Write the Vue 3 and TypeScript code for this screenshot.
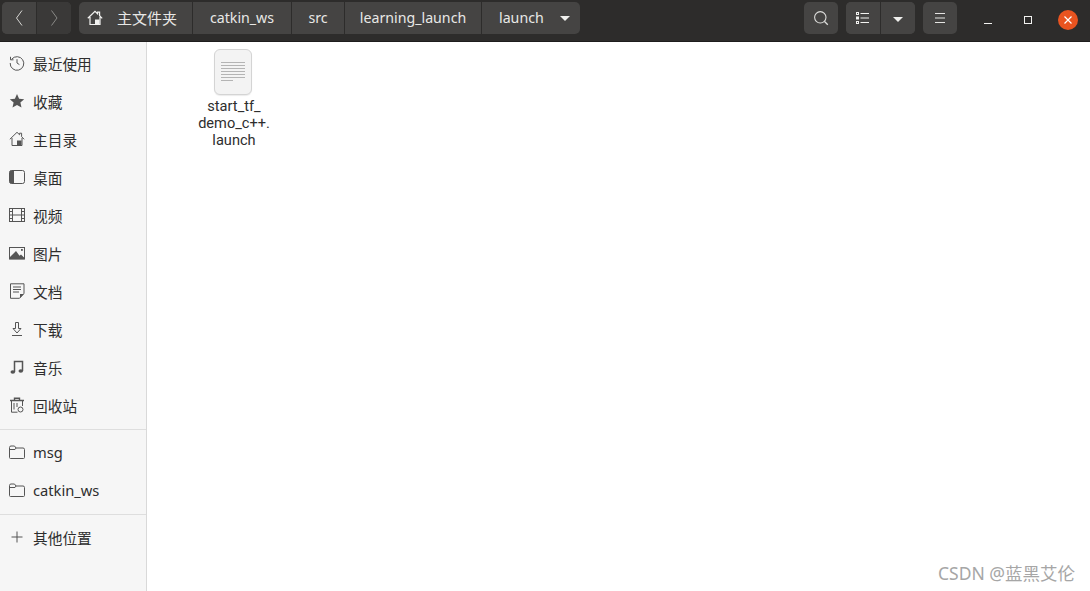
<script setup lang="ts">
interface Place { label: string; icon: string }
const groupA: Place[] = [
  { label: '最近使用', icon: 'recent' },
  { label: '收藏', icon: 'star' },
  { label: '主目录', icon: 'home' },
  { label: '桌面', icon: 'desktop' },
  { label: '视频', icon: 'video' },
  { label: '图片', icon: 'picture' },
  { label: '文档', icon: 'doc' },
  { label: '下载', icon: 'download' },
  { label: '音乐', icon: 'music' },
  { label: '回收站', icon: 'trash' },
]
const groupB: Place[] = [
  { label: 'msg', icon: 'folder' },
  { label: 'catkin_ws', icon: 'folder' },
]
const crumbs = [
  { label: 'catkin_ws', w: 99 },
  { label: 'src', w: 53 },
  { label: 'learning_launch', w: 137 },
]
</script>

<template>
  <div class="window">
    <header class="bar">
      <div class="group nav">
        <button class="btn nav-btn first">
          <svg width="16" height="16" viewBox="0 0 16 16"><path d="M11 .5 5.500 8l5.500 7.500" fill="none" stroke="#d6d6d3" stroke-width="1" /></svg>
        </button>
        <button class="btn nav-btn dim">
          <svg width="16" height="16" viewBox="0 0 16 16"><path d="M5.500 .5 11 8l-5.500 7.500" fill="none" stroke="#8a8a87" stroke-width="1" /></svg>
        </button>
      </div>
      <nav class="group path">
        <div class="crumb home-crumb">
          <svg width="16" height="16" viewBox="0 0 16 16"><path d="M.8 8.300 8 1.300l2.600 2.500V2.200h2v3.500l2.600 2.600M3 7v7.500h10V7" fill="none" stroke="#f2f2f0" stroke-width="1.200" /><rect x="8" y="9.500" width="4.500" height="5" fill="#f2f2f0" /></svg>
          <span class="home-label">主文件夹</span>
        </div>
        <div v-for="c in crumbs" :key="c.label" class="crumb" :style="{ width: c.w + 'px' }">{{ c.label }}</div>
        <div class="crumb last-crumb">
          <span>launch</span>
          <i class="caret"></i>
        </div>
      </nav>
      <div class="spacer"></div>
      <button class="btn single search">
        <svg width="16" height="16" viewBox="0 0 16 16"><circle cx="7.300" cy="7.300" r="5.700" fill="none" stroke="#dcdcda" stroke-width="1.100" /><path d="m11.500 11.500 3.300 3.300" stroke="#dcdcda" stroke-width="1.300" /></svg>
      </button>
      <div class="group view">
        <button class="btn view-a">
          <svg width="14" height="12" viewBox="0 0 14 12"><g fill="none" stroke="#f2f2f0"><rect x=".5" y=".5" width="2" height="2" /><rect x=".5" y="5" width="2" height="2" /><rect x=".5" y="9.500" width="2" height="2" /><path d="M4.500 1.500H13M4.500 6H13M4.500 10.500H13" /></g></svg>
        </button>
        <button class="btn view-b"><i class="caret"></i></button>
      </div>
      <button class="btn single menu">
        <svg width="12" height="12" viewBox="0 0 12 12"><path d="M1 1.500h10M1 6h10M1 10.500h10" stroke="#e4e4e2" stroke-width="1" /></svg>
      </button>
      <div class="win-controls">
        <span class="wc"><svg width="10" height="10" viewBox="0 0 10 10"><path d="M1 8.500h8" stroke="#f2f2f0" stroke-width="1" /></svg></span>
        <span class="wc"><svg width="10" height="10" viewBox="0 0 10 10"><rect x="1.500" y="1.500" width="7" height="7" fill="none" stroke="#f2f2f0" /></svg></span>
        <span class="wc close"><svg width="10" height="10" viewBox="0 0 10 10"><path d="m1.500 1.500 7 7m0-7-7 7" stroke="#fff" stroke-width="1.200" /></svg></span>
      </div>
    </header>

    <div class="body">
      <aside class="side">
        <ul class="list">
          <li v-for="p in groupA" :key="p.label" class="row">
            <svg class="ico" width="16" height="16" viewBox="0 0 16 16" fill="none" stroke="#555" stroke-width="1">
              <g v-if="p.icon === 'recent'"><path d="M2.700 4.200A6.800 6.800 0 1 1 1.200 8" /><path d="M1.500 1.800v3h3" /><path d="M8 4.200V8l2.400 1.600" /></g>
              <path v-else-if="p.icon === 'star'" d="m8 1 2.100 4.700 5.100.5-3.800 3.400 1.100 5L8 12l-4.500 2.600 1.100-5L.8 6.200l5.100-.5z" fill="#555" stroke="none" />
              <g v-else-if="p.icon === 'home'"><path d="M.8 8.300 8 1.300l2.600 2.500V2.200h2v3.500l2.600 2.600M3 7v7.500h10V7" /><rect x="8" y="9.500" width="4.500" height="5" fill="#555" stroke="none" /></g>
              <g v-else-if="p.icon === 'desktop'"><rect x=".5" y="1.500" width="15" height="13" rx="2" /><path d="M2.500 1.500H5v13H2.500a2 2 0 0 1-2-2v-9a2 2 0 0 1 2-2z" fill="#555" stroke="none" /></g>
              <g v-else-if="p.icon === 'video'"><rect x=".5" y="1.500" width="15" height="13" /><path d="M3.500 1.500v13M12.500 1.500v13M3.500 8h9M.5 4.500h3M.5 8h3M.5 11.500h3M12.500 4.500h3M12.500 8h3M12.500 11.500h3" /></g>
              <g v-else-if="p.icon === 'picture'"><rect x=".5" y="2.500" width="15" height="11.500" /><path d="M1 13.500h14v-1l-3-3-1.500 1.200L7 6l-6 6z" fill="#555" stroke="none" /><rect x="12" y="4" width="1.800" height="1.800" fill="#555" stroke="none" /><path d="M.5 13.500h15" stroke-width="1.500" /></g>
              <g v-else-if="p.icon === 'doc'"><path d="M15 10.500V1H1.500v14.500h9z" transform="translate(0 -.200)" /><path d="M4 4h8M4 6.500h8M4 9h6" /><path d="M15 11h-4v4z" fill="#555" stroke="none" /></g>
              <g v-else-if="p.icon === 'download'"><path d="M6.500 1.500h3v6h2.500L8 12 4 7.500h2.500zM3 14.500h10" /></g>
              <g v-else-if="p.icon === 'music'"><path d="M5.500 13V2.500h8V12" stroke-width="1.500" /><ellipse cx="3.800" cy="13" rx="2.300" ry="1.800" fill="#555" stroke="none" /><ellipse cx="11.800" cy="12" rx="2.300" ry="1.800" fill="#555" stroke="none" /></g>
              <g v-else-if="p.icon === 'trash'"><path d="M1 3.500h14M5.500 3V1.200h5V3" stroke-width="1.400" /><path d="M2.500 4v11.200h6M13.500 4v5M5 6v6.500M8 6v4" /><circle cx="11.500" cy="12.500" r="2.500" /></g>
            </svg>
            <span>{{ p.label }}</span>
          </li>
        </ul>
        <hr class="sep" />
        <ul class="list">
          <li v-for="p in groupB" :key="p.label" class="row">
            <svg class="ico" width="16" height="16" viewBox="0 0 16 16" fill="none" stroke="#555" stroke-width="1"><path d="M1.500 14.500a1 1 0 0 1-1-1v-10a1.500 1.500 0 0 1 1.500-1.500h3.500L7 4h7a1.500 1.500 0 0 1 1.500 1.500v8a1 1 0 0 1-1 1zM.5 5.500H6L7 4" /></svg>
            <span>{{ p.label }}</span>
          </li>
        </ul>
        <hr class="sep" />
        <ul class="list">
          <li class="row">
            <svg class="ico" width="16" height="16" viewBox="0 0 16 16"><path d="M8 2.500v11M2.500 8h11" stroke="#555" stroke-width="1" /></svg>
            <span>其他位置</span>
          </li>
        </ul>
      </aside>

      <main class="files">
        <figure class="file">
          <div class="thumb">
            <svg width="24" height="22" viewBox="0 0 24 22"><path d="M0 1.500h24M0 4.500h24M0 7.500h24M0 10.500h24M0 13.500h24M0 16.500h24M0 19.500h12" stroke="#b4b4b4" stroke-width="1" /></svg>
          </div>
          <figcaption>start_tf_<br />demo_c++.<br />launch</figcaption>
        </figure>
        <div class="mark">CSDN @蓝黑艾伦</div>
      </main>
    </div>
  </div>
</template>

<style scoped>
.window {
  width: 1090px;
  height: 591px;
  display: flex;
  flex-direction: column;
  overflow: hidden;
  font-family: "Noto Sans", "Noto Sans CJK SC", sans-serif;
  font-size: 14.700px;
  background: #fff;
}
.bar {
  height: 42px;
  box-sizing: border-box;
  flex: none;
  display: flex;
  align-items: flex-start;
  padding: 2px 0 0 2px;
  background: #2d2c2b;
  border-bottom: 1px solid #1e1d1d;
}
.group {
  display: flex;
  height: 32px;
  border-radius: 5px;
  background: #454443;
  overflow: hidden;
}
.btn {
  border: 0;
  padding: 0;
  margin: 0;
  height: 32px;
  background: #454443;
  display: flex;
  align-items: center;
  justify-content: center;
}
.nav { width: 69px; }
.nav-btn { width: 34.500px; }
.nav-btn.first { border-right: 1px solid #2d2c2b; }
.nav-btn.dim { background: #3a3938; }
.path {
  margin-left: 8px;
  width: 501px;
  color: #e8e8e6;
  font-size: 14.200px;
}
.crumb {
  box-sizing: border-box;
  height: 32px;
  display: flex;
  align-items: center;
  justify-content: center;
  border-right: 1px solid #2d2c2b;
  white-space: nowrap;
  padding-bottom: 2px;
}
.home-crumb {
  width: 114px;
  gap: 14px;
  justify-content: flex-start;
  padding: 0 0 0 8px;
}
.home-label {
  font-size: 15px;
  padding-bottom: 2px;
}
.last-crumb {
  flex: 1;
  border-right: 0;
  justify-content: flex-start;
  padding-left: 17px;
  gap: 16px;
}
.caret {
  width: 0;
  height: 0;
  border-left: 5px solid transparent;
  border-right: 5px solid transparent;
  border-top: 5px solid #f0f0ee;
  margin-top: 2px;
}
.spacer { flex: 1; }
.single {
  width: 34px;
  border-radius: 5px;
}
.view {
  width: 69px;
  margin-left: 8px;
}
.view-a {
  width: 34px;
  border-right: 1px solid #2d2c2b;
  box-sizing: content-box;
}
.view-b { width: 34px; }
.menu { margin-left: 8px; }
.win-controls {
  display: flex;
  width: 133px;
  height: 36px;
  padding-left: 11px;
  box-sizing: border-box;
  align-items: center;
}
.wc {
  width: 40px;
  display: flex;
  align-items: center;
  justify-content: center;
}
.close {
  width: 20px;
  height: 20px;
  margin-left: 10px;
  border-radius: 50%;
  background: #e95420;
}
.body {
  flex: 1;
  display: flex;
  min-height: 0;
}
.side {
  width: 147px;
  box-sizing: border-box;
  flex: none;
  background: #f6f6f6;
  border-right: 1px solid #d9d9d9;
  padding-top: 2px;
  color: #2e2e2e;
}
.list {
  list-style: none;
  margin: 0;
  padding: 0;
}
.row {
  height: 38px;
  display: flex;
  align-items: center;
  padding-left: 9px;
  gap: 8px;
}
.ico { flex: none; }
.sep {
  margin: 5px 0 3px;
  height: 1px;
  border: 0;
  background: #dedede;
}
.files {
  flex: 1;
  position: relative;
  background: #fff;
  padding: 7px 0 0 41px;
}
.file {
  margin: 0;
  width: 92px;
  display: flex;
  flex-direction: column;
  align-items: center;
  color: #2e2e2e;
  font-family: Roboto, "Noto Sans", sans-serif;
  font-size: 14.600px;
  line-height: 17px;
  text-align: center;
}
.thumb {
  width: 38px;
  height: 46px;
  box-sizing: border-box;
  margin-left: -2px;
  border: 1px solid #d4d4d4;
  border-radius: 6px;
  background: #f3f3f3;
  box-shadow: 0 1px 1px rgba(0, 0, 0, 0.08);
  display: flex;
  align-items: center;
  justify-content: center;
  margin-bottom: 3px;
}
.mark {
  position: absolute;
  right: 15px;
  bottom: 6px;
  color: #a6a6a6;
  font-size: 17.500px;
  line-height: 24px;
}
</style>
